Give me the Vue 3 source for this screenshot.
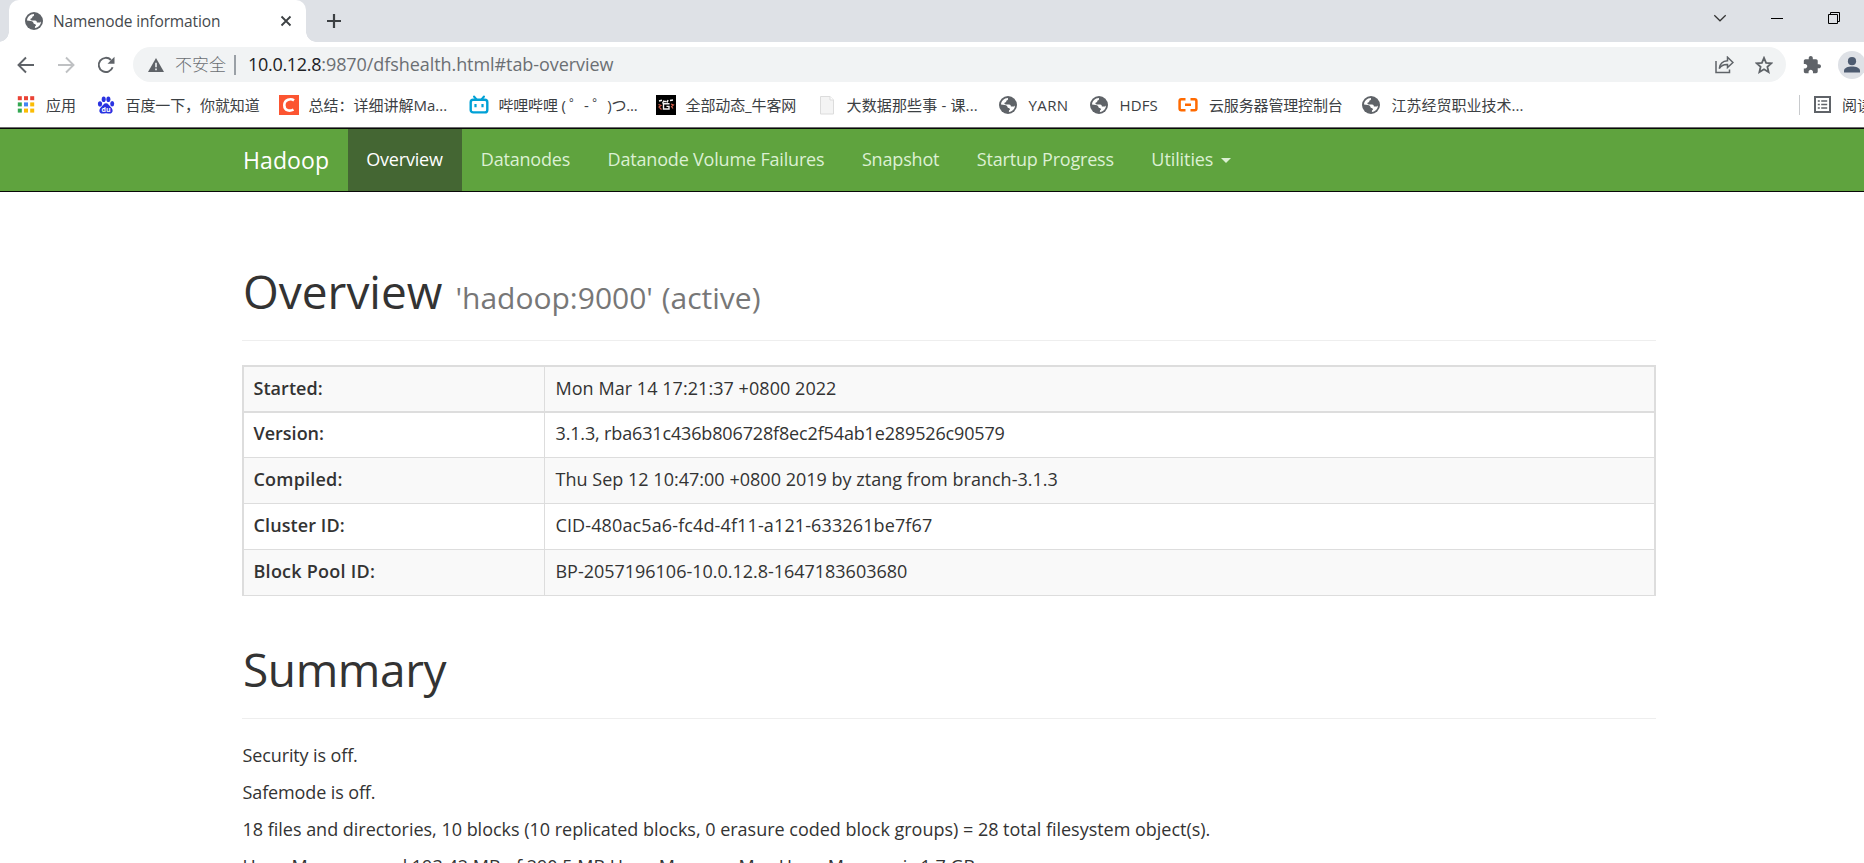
<template>
  <div class="window">
    <header class="tab-strip">
      <div class="tab">
        <svg class="globe" viewBox="0 0 18 18">
          <use href="#globe" />
        </svg>
        <span class="tab-title">Namenode information</span>
        <svg class="tab-close" viewBox="0 0 12 12">
          <path d="M1.5 1.5l9 9M10.5 1.5l-9 9" />
        </svg>
      </div>
      <svg class="new-tab" viewBox="0 0 16 16">
        <path d="M8 1v14M1 8h14" />
      </svg>
      <div class="window-buttons">
        <svg class="chevron" viewBox="0 0 14 14">
          <path d="M1.3 4.2L7 9.8l5.7-5.6" />
        </svg>
        <svg class="win-btn" viewBox="0 0 12 12">
          <path d="M0 6.5h12" />
        </svg>
        <svg class="win-btn" viewBox="0 0 12 12">
          <path d="M.5 2.5h9v9h-9zM2.5 2.5V.5h9v9h-2" />
        </svg>
      </div>
    </header>

    <div class="toolbar">
      <svg class="nav-icon" viewBox="0 0 18 18">
        <path d="M17 9H1.5M9 1.5L1.5 9L9 16.5" />
      </svg>
      <svg class="nav-icon disabled" viewBox="0 0 18 18">
        <path d="M1 9h15.5M9 1.5L16.5 9L9 16.5" />
      </svg>
      <svg class="nav-icon reload" viewBox="0 0 18 18">
        <path d="M15.6 11.2A7.1 7.1 0 1 1 14 4" />
        <path class="solid" d="M17.5 .8v7h-7z" />
      </svg>
      <div class="address">
        <svg class="warning" viewBox="0 0 16 14">
          <path d="M8 0l8 14H0z" fill="#5f6368" />
          <path d="M8 4.8v4.4M8 10.6v1.7" stroke="#f1f3f4" stroke-width="1.6" />
        </svg>
        <span class="insecure">不安全</span>
        <span class="bar"></span>
        <span class="host">10.0.12.8</span>
        <span class="path">:9870/dfshealth.html#tab-overview</span>
        <svg class="share" viewBox="0 0 19 18">
          <path d="M1 5v11.5h13.5V13.5M4.300 12.500C4.800 7.800 7.800 5 12.500 4.700V1.200L18 6.500l-5.500 5V8.500C8.500 8.300 6 9.800 4.300 12.500z" />
        </svg>
        <svg class="star" viewBox="0 0 18 18">
          <path d="M9 1.900l2.100 4.900 5.300.5-4 3.500 1.200 5.200L9 13.200 4.400 16l1.200-5.200-4-3.500 5.300-.5z" />
        </svg>
      </div>
      <svg class="puzzle" viewBox="0 0 22 22">
        <path
          d="M19.500 10H18V6c0-1.100-.9-2-2-2h-4V2.500C12 1.100 10.900 0 9.500 0S7 1.100 7 2.500V4H3c-1.100 0-2 .9-2 2v3.800h1.500c1.500 0 2.700 1.200 2.700 2.700S4 15.200 2.500 15.200H1V19c0 1.100.9 2 2 2h3.800v-1.500c0-1.500 1.200-2.700 2.700-2.700s2.700 1.200 2.700 2.700V21H16c1.100 0 2-.9 2-2v-4h1.500c1.400 0 2.500-1.100 2.500-2.500S20.900 10 19.500 10z"
        />
      </svg>
      <svg class="avatar" viewBox="0 0 28 28">
        <circle cx="14" cy="14" r="14" fill="#dee1e6" />
        <circle cx="14" cy="10.200" r="4.100" fill="#4d5b70" />
        <path d="M6 21.500v-1.800c0-2.800 4-4.200 8-4.200s8 1.400 8 4.200v1.800z" fill="#4d5b70" />
      </svg>
    </div>

    <div class="bookmarks">
      <div
        v-for="b in bookmarks"
        :key="b.title"
        class="bookmark"
        :style="{ width: b.width + 'px' }"
      >
        <svg v-if="b.icon === 'apps'" class="bm-icon" viewBox="0 0 20 20">
          <rect
            v-for="(c, i) in appColors"
            :key="i"
            :x="1.8 + (i % 3) * 6.2"
            :y="1.2 + Math.floor(i / 3) * 6.2"
            width="4"
            height="4"
            :fill="c"
          />
        </svg>
        <svg v-else-if="b.icon === 'baidu'" class="bm-icon" viewBox="0 0 20 20">
          <g fill="#2932e1">
            <ellipse cx="4" cy="9" rx="2.1" ry="2.7" />
            <ellipse cx="7.7" cy="4.3" rx="2" ry="2.8" />
            <ellipse cx="12.4" cy="4.3" rx="2" ry="2.8" />
            <ellipse cx="16.2" cy="8.8" rx="2" ry="2.7" />
            <path d="M10 8.300c2.200 0 2.800 1.900 4.500 3.400 3.700 3.300 2 6.900-.8 6.900-1.600 0-2.200-.4-3.700-.4s-2.100.4-3.700.4c-2.800 0-4.500-3.600-.8-6.900C7.200 10.200 7.800 8.300 10 8.300z" />
          </g>
          <text x="10" y="16.7" text-anchor="middle" class="du">du</text>
        </svg>
        <svg v-else-if="b.icon === 'csdn'" class="bm-icon" viewBox="0 0 20 20">
          <rect width="20" height="20" fill="#fc5531" />
          <path d="M15 5.300C12 3.300 5.300 4 5.300 10.300c0 6 5.700 6 9.200 4.300" fill="none" stroke="#fff" stroke-width="2.6" />
        </svg>
        <svg v-else-if="b.icon === 'bili'" class="bm-icon" viewBox="0 0 20 20">
          <path d="M5 1.500l2.500 3M15 1.500l-2.500 3" stroke="#00a1d6" stroke-width="2" stroke-linecap="round" />
          <rect x="1.7" y="4.800" width="16.600" height="12.600" rx="2.500" fill="none" stroke="#00a1d6" stroke-width="2.400" />
          <path d="M6.500 9v3.200M13.500 9v3.200" stroke="#00a1d6" stroke-width="2.200" />
        </svg>
        <svg v-else-if="b.icon === 'niuke'" class="bm-icon" viewBox="0 0 20 20">
          <rect width="20" height="20" fill="#000" />
          <path d="M3 6l3-.8M6.500 8.500L8 5.500M7.500 6.500h3M12 5l-.8 2.500M14 5.500l3-.5M13.500 8.800H7.500v5.200h5.500v-2.600h-2.500" fill="none" stroke="#f4f4f4" stroke-width="1.400" />
          <path d="M2.500 9.500l2.500 1-2 1.500 2.500 2.500M15 9l2.500 1-2 1.500 1.500 2" fill="none" stroke="#d9604c" stroke-width="1.100" />
        </svg>
        <svg v-else-if="b.icon === 'doc'" class="bm-icon" viewBox="0 0 20 20">
          <path d="M3.500 1.500h9.500l3.500 3.500v14h-13z" fill="#f4f4f4" stroke="#dcdcdc" />
          <path d="M13 1.500v3.500h3.500" fill="#fff" stroke="#dcdcdc" />
        </svg>
        <svg v-else-if="b.icon === 'ali'" class="bm-icon ali" viewBox="0 0 20 20">
          <path d="M7.500 4.200H3.300Q1.600 4.200 1.600 6v7.500q0 1.800 1.700 1.800h4.200M12.500 4.200h4.200Q18.400 4.200 18.400 6v7.500q0 1.800-1.700 1.800h-4.200M7 9.800h6" fill="none" stroke="#ff6a00" stroke-width="2.500" />
        </svg>
        <svg v-else class="bm-icon bm-globe" viewBox="-1 -1 20 20">
          <use href="#globe" width="18" height="18" />
        </svg>
        <span :style="{ letterSpacing: b.spacing + 'px' }">{{ b.title }}</span>
      </div>
      <div class="reading-list">
        <svg viewBox="0 0 17 17">
          <path d="M1 1h15v15H1z" fill="none" stroke="#5f6368" stroke-width="2" />
          <path d="M3.800 5h2M3.800 8.500h2M3.800 12h2M7.200 5h6M7.200 8.500h6M7.200 12h6" stroke="#5f6368" stroke-width="1.700" />
        </svg>
        <span>阅读清单</span>
      </div>
    </div>

    <nav class="navbar">
      <a class="brand">Hadoop</a>
      <a
        v-for="item in menu"
        :key="item.label"
        class="menu-item"
        :class="{ active: item.active }"
        :style="{ letterSpacing: item.spacing + 'px' }"
        >{{ item.label }}<i v-if="item.dropdown" class="caret"></i
      ></a>
    </nav>

    <main class="container">
      <h1 class="overview-title">
        Overview <small>'hadoop:9000' (active)</small>
      </h1>

      <table class="info">
        <tbody>
          <tr v-for="row in info" :key="row.label">
            <th :style="{ letterSpacing: row.labelSpacing + 'px' }">
              {{ row.label }}
            </th>
            <td :style="{ letterSpacing: row.spacing + 'px' }">
              {{ row.value }}
            </td>
          </tr>
        </tbody>
      </table>

      <h1 class="summary-title">Summary</h1>
      <p class="tight">Security is off.</p>
      <p class="tight">Safemode is off.</p>
      <p class="files">
        18 files and directories, 10 blocks (10 replicated blocks, 0 erasure
        coded block groups) = 28 total filesystem object(s).
      </p>
      <p>
        Heap Memory used 193.42 MB of 290.5 MB Heap Memory. Max Heap Memory is
        1.7 GB.
      </p>
    </main>

    <svg class="symbols">
      <symbol id="globe" viewBox="0 0 18 18">
        <circle cx="9" cy="9" r="9" fill="#5f6368" />
        <path
          d="M2 8.600C2.200 5 5 2.200 8.900 2c.5 1.400-.2 2.300-1.400 2.600-.2 1.500-.8 2-2 2.200-.3 1.200.2 1.700 1.400 1.700h3.200c1.300 0 1.700.9 1.800 2h2.200c1.200 0 1.700-.6 1.900-1.300.1 3.400-2.500 6.400-6 6.800-.3-1.200.1-1.900 1-2.200-.1-1.500-.9-2-2.200-2.100-.6-1.700-1.300-2.500-3-2.600z"
          fill="#fff"
        />
      </symbol>
    </svg>
  </div>
</template>

<script setup>
const appColors = [
  "#ea4335",
  "#ea4335",
  "#ea4335",
  "#34a853",
  "#4285f4",
  "#fbbc04",
  "#34a853",
  "#fbbc04",
  "#fbbc04",
];

const bookmarks = [
  { title: "应用", icon: "apps", width: 79.5, spacing: 0 },
  { title: "百度一下，你就知道", icon: "baidu", width: 183, spacing: -0.1 },
  { title: "总结：详细讲解Ma...", icon: "csdn", width: 190, spacing: 0 },
  { title: "哔哩哔哩 ( ゜- ゜)つ...", icon: "bili", width: 187, spacing: -0.2 },
  { title: "全部动态_牛客网", icon: "niuke", width: 161, spacing: -0.1 },
  { title: "大数据那些事 - 课...", icon: "doc", width: 182, spacing: 0.15 },
  { title: "YARN", icon: "globe", width: 91, spacing: 0.4 },
  { title: "HDFS", icon: "globe", width: 89.5, spacing: 0.1 },
  { title: "云服务器管理控制台", icon: "ali", width: 182.5, spacing: -0.15 },
  { title: "江苏经贸职业技术...", icon: "globe", width: 180, spacing: 0 },
];

const menu = [
  { label: "Overview", spacing: -0.19, active: true },
  { label: "Datanodes", spacing: -0.2 },
  { label: "Datanode Volume Failures", spacing: -0.18 },
  { label: "Snapshot", spacing: -0.17 },
  { label: "Startup Progress", spacing: -0.2 },
  { label: "Utilities", spacing: -0.09, dropdown: true },
];

const info = [
  {
    label: "Started:",
    value: "Mon Mar 14 17:21:37 +0800 2022",
    labelSpacing: 0.05,
    spacing: 0.05,
  },
  {
    label: "Version:",
    value: "3.1.3, rba631c436b806728f8ec2f54ab1e289526c90579",
    labelSpacing: 0,
    spacing: -0.15,
  },
  {
    label: "Compiled:",
    value: "Thu Sep 12 10:47:00 +0800 2019 by ztang from branch-3.1.3",
    labelSpacing: 0.2,
    spacing: 0.02,
  },
  {
    label: "Cluster ID:",
    value: "CID-480ac5a6-fc4d-4f11-a121-633261be7f67",
    labelSpacing: 0.1,
    spacing: 0.12,
  },
  {
    label: "Block Pool ID:",
    value: "BP-2057196106-10.0.12.8-1647183603680",
    labelSpacing: 0.25,
    spacing: -0.02,
  },
];
</script>

<style>
body {
  margin: 0;
  overflow: hidden;
}
</style>

<style scoped>
.window {
  width: 100%;
  height: 863px;
  overflow: hidden;
  background: #fff;
  color: #333;
  font-family: "Open Sans", "Noto Sans CJK SC", sans-serif;
  font-size: 18px;
}

svg {
  flex: none;
  display: block;
}

.symbols {
  width: 0;
  height: 0;
}

/* tab strip */
.tab-strip {
  display: flex;
  align-items: center;
  height: 42px;
  background: #dee1e6;
  padding-left: 9px;
}

.tab {
  position: relative;
  display: flex;
  align-items: center;
  box-sizing: border-box;
  width: 297px;
  height: 42px;
  padding: 0 14px 0 16px;
  background: #fff;
  border-radius: 10px 10px 0 0;
}

.tab::before,
.tab::after {
  content: "";
  position: absolute;
  bottom: 0;
  width: 10px;
  height: 10px;
}

.tab::before {
  left: -10px;
  background: radial-gradient(circle at 0 0, #dee1e6 9.5px, #fff 10px);
}

.tab::after {
  right: -10px;
  background: radial-gradient(circle at 100% 0, #dee1e6 9.5px, #fff 10px);
}

.globe {
  width: 18px;
  height: 18px;
}

.tab-title {
  margin-left: 10px;
  flex: 1;
  font-size: 15.5px;
  letter-spacing: -0.13px;
  color: #45494d;
}

.tab-close {
  width: 12px;
  height: 12px;
  fill: none;
  stroke: #3c4043;
  stroke-width: 1.8;
}

.new-tab {
  width: 16px;
  height: 16px;
  margin-left: 20px;
  fill: none;
  stroke: #3c4043;
  stroke-width: 2.2;
}

.window-buttons {
  display: flex;
  align-items: center;
  gap: 45px;
  margin-left: auto;
  padding: 0 24px 6px 0;
}

.win-btn {
  width: 12px;
  height: 12px;
  fill: none;
  stroke: #000;
}

.chevron {
  width: 14px;
  height: 14px;
  fill: none;
  stroke: #333;
  stroke-width: 1.2;
  margin-right: -1px;
}

/* toolbar */
.toolbar {
  display: flex;
  align-items: center;
  height: 45px;
  padding-left: 17px;
  box-sizing: border-box;
}

.nav-icon {
  width: 18px;
  height: 18px;
  margin-right: 22px;
  fill: none;
  stroke: #5f6368;
  stroke-width: 1.9;
}

.nav-icon.disabled {
  stroke: #bfc1c3;
}

.reload {
  margin-right: 18px;
}

.reload .solid {
  fill: #5f6368;
  stroke: none;
}

.address {
  display: flex;
  align-items: center;
  flex: none;
  box-sizing: border-box;
  width: 1653px;
  height: 35px;
  padding: 0 13px 0 15px;
  border-radius: 18px;
  background: #f1f3f4;
  color: #6b6f73;
  line-height: 35px;
}

.warning {
  width: 16px;
  height: 14px;
}

.insecure {
  margin-left: 11px;
  font-size: 17px;
  font-weight: 300;
}

.bar {
  width: 2px;
  height: 20px;
  margin: 0 12px 0 8px;
  background: #9aa0a6;
}

.host {
  color: #202124;
  letter-spacing: -0.3px;
}

.path {
  letter-spacing: -0.07px;
}

.share {
  width: 19px;
  height: 18px;
  margin-left: auto;
  fill: none;
  stroke: #5f6368;
  stroke-width: 1.5;
}

.star {
  width: 18px;
  height: 18px;
  margin-left: 21px;
  fill: none;
  stroke: #5f6368;
  stroke-width: 1.8;
}

.puzzle {
  width: 18px;
  height: 18px;
  margin-left: 17px;
  fill: #5f6368;
}

.avatar {
  width: 28px;
  height: 28px;
  margin-left: 17px;
}

/* bookmarks bar */
.bookmarks {
  display: flex;
  align-items: center;
  box-sizing: border-box;
  height: 40px;
  padding: 0 0 5px 16px;
  font-size: 15px;
  color: #3c4043;
  white-space: nowrap;
}

.bookmark {
  display: flex;
  flex: none;
  align-items: center;
}

.bm-icon {
  width: 20px;
  height: 20px;
  margin-right: 10px;
}

.bm-globe,
.ali {
  margin-left: -1px;
  margin-right: 11px;
}

.du {
  font-family: "Open Sans", sans-serif;
  font-size: 7px;
  font-weight: 700;
  fill: #fff;
}

.reading-list {
  display: flex;
  flex: none;
  align-items: center;
  width: 65px;
  height: 20px;
  box-sizing: border-box;
  margin-left: auto;
  padding-left: 14px;
  border-left: 1px solid #c8cacd;
  overflow: hidden;
}

.reading-list svg {
  width: 17px;
  height: 17px;
  margin-right: 11px;
}

/* page */
.navbar {
  display: flex;
  box-sizing: border-box;
  height: 65px;
  padding: 1px 0 0 224px;
  border-top: 1px solid #6b6b6b;
  border-bottom: 1px solid #080808;
  background: #5fa33e;
  box-shadow: inset 0 1px 0 #080808;
  line-height: 60px;
}

.brand {
  padding: 0 19px;
  width: 86px;
  font-size: 23px;
  letter-spacing: 0.1px;
  line-height: 63px;
  color: #fff;
}

.menu-item {
  padding: 0 18.75px;
  color: #dcf0d3;
}

.menu-item.active {
  padding: 0 19.25px 0 18.25px;
  background: #446633;
  color: #fff;
}

.caret {
  display: inline-block;
  margin-left: 8px;
  vertical-align: 3px;
  border-top: 5px solid #dcf0d3;
  border-left: 5px solid transparent;
  border-right: 5px solid transparent;
}

.container {
  width: 1414px;
  padding: 74px 0 0 242px;
}

h1 {
  margin: 0 0 24px;
  padding: 0 0 24px 1px;
  border-bottom: 1px solid #eee;
  font-size: 46px;
  font-weight: 400;
  line-height: 50px;
}

h1 small {
  font-size: 30px;
  line-height: 1;
  color: #777;
}

.overview-title {
  word-spacing: 1px;
}

.summary-title {
  margin-top: 48px;
  letter-spacing: -0.4px;
}

.info {
  width: 1414px;
  border: 2px solid #ddd;
  border-bottom: 0;
  border-spacing: 0;
  table-layout: fixed;
}

.info th,
.info td {
  box-sizing: border-box;
  height: 46px;
  padding: 0 10px 3px;
  border-bottom: 1px solid #ddd;
  text-align: left;
  line-height: 25px;
}

.info th {
  width: 301px;
  padding-left: 9.5px;
  border-right: 1px solid #ddd;
  font-weight: 600;
}

.info td {
  padding-left: 10.5px;
}

.info tr:nth-child(odd) {
  background: #f9f9f9;
}

.info tr:first-child th,
.info tr:first-child td {
  padding-bottom: 1px;
  border-bottom-width: 2px;
}

.info tr:nth-child(2) th,
.info tr:nth-child(2) td {
  height: 45px;
}

p {
  margin: 0 0 12px;
  padding-left: 0.5px;
  line-height: 25px;
  white-space: nowrap;
}

.tight {
  letter-spacing: -0.12px;
}

.files {
  letter-spacing: -0.015px;
}
</style>
